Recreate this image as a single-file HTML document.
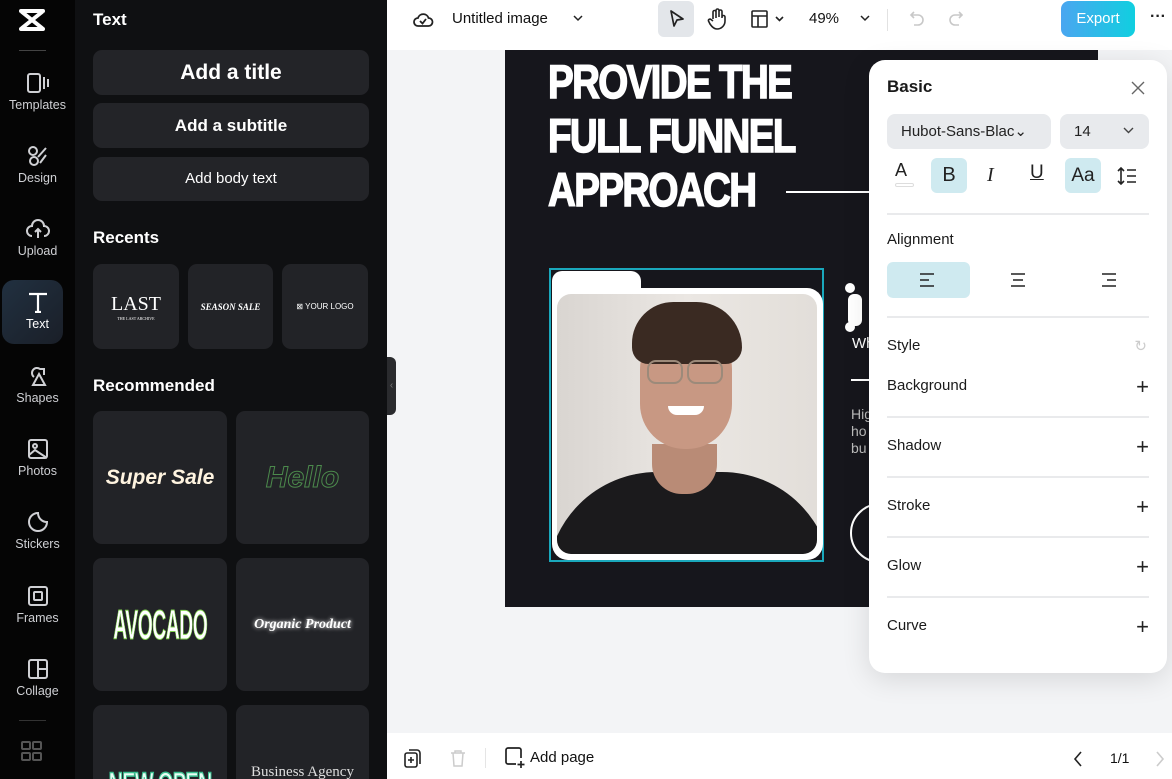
<!DOCTYPE html>
<html style="overflow:hidden"><head><meta charset="utf-8"><style>
*{box-sizing:border-box;margin:0;padding:0}
html,body{width:1172px;height:779px;overflow:hidden}
body{position:relative;font-family:"Liberation Sans",sans-serif;background:#f3f4f6}
.abs{position:absolute}
.rail{left:0;top:0;width:75px;height:779px;background:#050505;overflow:hidden}
.ri{position:absolute;left:0;width:75px;text-align:center;color:#cfd0d4;font-size:12.5px}
.ri svg{display:block;margin:0 auto 4px}
.panel{left:75px;top:0;width:312px;height:779px;background:#0f1012;overflow:hidden}
.btn{position:absolute;left:18px;width:276px;background:#232428;border-radius:9px;color:#fff;text-align:center;font-weight:bold}
.card{position:absolute;background:#222327;border-radius:9px;display:flex;align-items:center;justify-content:center;color:#fff;overflow:hidden;white-space:nowrap}
.h{position:absolute;left:18px;color:#fff;font-weight:bold;font-size:17px}
.top{left:387px;top:0;width:785px;height:50px;background:#fff}
.rp{left:869px;top:60px;width:298px;height:613px;background:#fff;border-radius:16px;box-shadow:0 6px 28px rgba(0,0,0,.12)}
.row{position:absolute;left:18px;width:262px;font-size:15px;color:#1a1a1a}
.sep{position:absolute;left:18px;width:262px;height:2px;background:#e9eaec}
.plus{position:absolute;right:0;top:-3px;font-size:22px;font-weight:300;color:#222}
</style></head><body>

<div class="abs rail">
 <svg class="abs" style="left:18px;top:8px" width="28" height="24" viewBox="0 0 28 24"><path d="M3 3h22M3 21h22M4 4l20 16M24 4L4 20" stroke="#fff" stroke-width="4" fill="none" stroke-linecap="round"/></svg>
 <div class="abs" style="left:19px;top:50px;width:27px;height:1px;background:#444"></div>
 <div class="ri" style="top:72px"><svg width="24" height="22" viewBox="0 0 24 22" fill="none" stroke="#cfd0d4" stroke-width="2"><rect x="2" y="2" width="12" height="18" rx="2"/><path d="M18 5v12M22 7v8"/></svg>Templates</div>
 <div class="ri" style="top:145px"><svg width="24" height="22" viewBox="0 0 24 22" fill="none" stroke="#cfd0d4" stroke-width="2"><circle cx="7" cy="6" r="4"/><circle cx="8" cy="16" r="4"/><path d="M12 12l8-9M14 18l6-8"/></svg>Design</div>
 <div class="ri" style="top:218px"><svg width="24" height="22" viewBox="0 0 24 22" fill="none" stroke="#cfd0d4" stroke-width="2"><path d="M6 18a5 5 0 0 1 0-10a6 6 0 0 1 12 0a5 5 0 0 1 0 10M12 20v-9M9 14l3-3 3 3"/></svg>Upload</div>
 <div class="abs" style="left:2px;top:280px;width:61px;height:64px;border-radius:12px;background:linear-gradient(135deg,#213040,#1a1f28)"></div>
 <div class="ri" style="top:291px;color:#fff"><svg width="24" height="22" viewBox="0 0 24 22" fill="none" stroke="#fff" stroke-width="2.2"><path d="M3 3h18M12 3v18M9 21h6"/></svg>Text</div>
 <div class="ri" style="top:365px"><svg width="24" height="22" viewBox="0 0 24 22" fill="none" stroke="#cfd0d4" stroke-width="2"><path d="M8 12a5 5 0 1 1 6-8l4 0v6"/><path d="M13 9l6 11H7z"/></svg>Shapes</div>
 <div class="ri" style="top:438px"><svg width="24" height="22" viewBox="0 0 24 22" fill="none" stroke="#cfd0d4" stroke-width="2"><rect x="3" y="2" width="18" height="18" rx="2"/><circle cx="9" cy="8" r="2"/><path d="M3 17l6-5 12 8"/></svg>Photos</div>
 <div class="ri" style="top:511px"><svg width="24" height="22" viewBox="0 0 24 22" fill="none" stroke="#cfd0d4" stroke-width="2"><path d="M21 11a9 9 0 1 1-9-9c0 5 4 9 9 9z"/></svg>Stickers</div>
 <div class="ri" style="top:585px"><svg width="24" height="22" viewBox="0 0 24 22" fill="none" stroke="#cfd0d4" stroke-width="2"><rect x="3" y="2" width="18" height="18" rx="2"/><rect x="8" y="7" width="8" height="8" rx="1"/></svg>Frames</div>
 <div class="ri" style="top:658px"><svg width="24" height="22" viewBox="0 0 24 22" fill="none" stroke="#cfd0d4" stroke-width="2"><rect x="3" y="2" width="18" height="18" rx="2"/><path d="M12 2v18M12 11h9"/></svg>Collage</div>
 <div class="abs" style="left:19px;top:720px;width:27px;height:1px;background:#333"></div>
 <svg class="abs" style="left:21px;top:741px" width="22" height="20" viewBox="0 0 22 20" fill="none" stroke="#555" stroke-width="2"><rect x="1" y="1" width="8" height="7" rx="1"/><rect x="12" y="1" width="8" height="7" rx="1"/><rect x="1" y="12" width="8" height="7" rx="1"/><rect x="12" y="12" width="8" height="7" rx="1"/></svg>
</div>

<div class="abs panel">
 <div class="h" style="top:10px">Text</div>
 <div class="btn" style="top:50px;height:45px;line-height:45px;font-size:21px">Add a title</div>
 <div class="btn" style="top:103px;height:45px;line-height:45px;font-size:17px">Add a subtitle</div>
 <div class="btn" style="top:157px;height:44px;line-height:44px;font-size:15px;font-weight:normal">Add body text</div>
 <div class="h" style="top:228px">Recents</div>
 <div class="card" style="left:18px;top:264px;width:86px;height:85px;font-family:'Liberation Serif',serif;font-size:20px;flex-direction:column">LAST<span style="font-size:4px">THE LAST ARCHIVE</span></div>
 <div class="card" style="left:113px;top:264px;width:85px;height:85px;font-family:'Liberation Serif',serif;font-size:9px;font-weight:bold;font-style:italic">SEASON SALE</div>
 <div class="card" style="left:207px;top:264px;width:86px;height:85px;font-size:8px">⊠ YOUR LOGO</div>
 <div class="h" style="top:376px">Recommended</div>
 <div class="card" style="left:18px;top:411px;width:134px;height:133px;font-size:21px;font-weight:bold;font-style:italic;color:#fff4e0">Super Sale</div>
 <div class="card" style="left:161px;top:411px;width:133px;height:133px;font-size:30px;font-weight:bold;font-style:italic;color:transparent;-webkit-text-stroke:1px #4c8a4c">Hello</div>
 <div class="card" style="left:18px;top:558px;width:134px;height:133px"><span style="display:inline-block;font-size:42px;font-weight:bold;color:#fff;-webkit-text-stroke:1px #7fd34c;transform:scaleX(.46);letter-spacing:-1px">AVOCADO</span></div>
 <div class="card" style="left:161px;top:558px;width:133px;height:133px;font-size:14px;font-weight:bold;font-style:italic;font-family:'Liberation Serif',serif;text-shadow:0 0 4px #fff">Organic Product</div>
 <div class="card" style="left:18px;top:705px;width:134px;height:90px;align-items:flex-end"><span style="display:inline-block;white-space:nowrap;font-size:32px;font-weight:bold;color:#eafff5;-webkit-text-stroke:1.5px #3bbf90;transform:scaleX(.62);letter-spacing:-1px;line-height:30px;margin-bottom:-4px">NEW OPEN</span></div>
 <div class="card" style="left:161px;top:705px;width:133px;height:90px;align-items:flex-end;padding-bottom:14px;font-size:15px;font-family:'Liberation Serif',serif;color:#ddd">Business Agency</div>
</div>
<div class="abs" style="left:387px;top:357px;width:9px;height:58px;background:#2a2b2e;border-radius:0 6px 6px 0;color:#777;font-size:10px;line-height:58px;text-align:center">‹</div>

<div class="abs top">
 <svg class="abs" style="left:25px;top:9px" width="22" height="20" viewBox="0 0 22 20" fill="none" stroke="#222" stroke-width="1.8"><path d="M6 17a4 4 0 0 1 0-8a5.5 5.5 0 0 1 10.5 0a4 4 0 0 1 0 8z"/><path d="M8 12l2.5 2.5L14 10"/></svg>
 <div class="abs" style="left:65px;top:10px;font-size:15px;color:#111">Untitled image</div>
 <svg class="abs" style="left:186px;top:15px" width="10" height="7"><path d="M1 1l4 4 4-4" stroke="#222" stroke-width="1.5" fill="none"/></svg>
 <div class="abs" style="left:271px;top:1px;width:36px;height:36px;background:#e3e6ea;border-radius:6px"></div>
 <svg class="abs" style="left:282px;top:9px" width="16" height="20" viewBox="0 0 16 20"><path d="M2 2l12 8-6 1-3 6z" stroke="#222" stroke-width="1.7" fill="none" stroke-linejoin="round"/></svg>
 <svg class="abs" style="left:320px;top:8px" width="20" height="22" viewBox="0 0 20 22" fill="none" stroke="#222" stroke-width="1.6" stroke-linejoin="round"><path d="M6 11V4a1.5 1.5 0 0 1 3 0v6M9 9V2.5a1.5 1.5 0 0 1 3 0V9M12 9V3.5a1.5 1.5 0 0 1 3 0V10M15 9a1.5 1.5 0 0 1 3 0v4a8 8 0 0 1-8 8c-3 0-5-2-7-5l-1.5-3a1.5 1.5 0 0 1 2.5-1.5L6 13"/></svg>
 <svg class="abs" style="left:364px;top:10px" width="34" height="18" viewBox="0 0 34 18" fill="none" stroke="#222" stroke-width="1.6"><rect x="1" y="1" width="15" height="16" rx="1"/><path d="M1 6h15M7 6v11M25 7l3.5 3.5L32 7"/></svg>
 <div class="abs" style="left:422px;top:10px;font-size:15px;color:#111">49%</div>
 <svg class="abs" style="left:473px;top:15px" width="10" height="7"><path d="M1 1l4 4 4-4" stroke="#222" stroke-width="1.5" fill="none"/></svg>
 <div class="abs" style="left:500px;top:9px;width:1px;height:22px;background:#e2e2e2"></div>
 <svg class="abs" style="left:522px;top:10px" width="16" height="18" viewBox="0 0 16 18" fill="none" stroke="#c8c8c8" stroke-width="1.6"><path d="M5 2L2 5l3 3M2 5h7a5 5 0 0 1 0 10H5"/></svg>
 <svg class="abs" style="left:561px;top:10px" width="16" height="18" viewBox="0 0 16 18" fill="none" stroke="#c8c8c8" stroke-width="1.6"><path d="M11 2l3 3-3 3M14 5H7a5 5 0 0 0 0 10h4"/></svg>
 <div class="abs" style="left:674px;top:1px;width:74px;height:36px;border-radius:8px;background:linear-gradient(90deg,#4aa6f0,#10cfe0);color:#fff;font-size:15px;text-align:center;line-height:36px">Export</div>
 <div class="abs" style="left:763px;top:8px;font-size:16px;color:#222;font-weight:bold">···</div>
</div>

<!-- artboard -->
<div class="abs" style="left:505px;top:50px;width:593px;height:557px;background:#16161c;overflow:hidden">
 <div class="abs" style="left:43px;top:5px;color:#fff;font-weight:bold;font-size:47px;line-height:54px;letter-spacing:-2px;transform:scaleX(.82);transform-origin:left top;white-space:nowrap;-webkit-text-stroke:1.5px #fff">PROVIDE THE<br>FULL FUNNEL<br>APPROACH</div>
 <div class="abs" style="left:281px;top:141px;width:90px;height:2px;background:#fff"></div>
 <div class="abs" style="left:44px;top:218px;width:275px;height:294px;border:2px solid #1aa8bc"></div>
 <div class="abs" style="left:47px;top:221px;width:89px;height:30px;background:#fff;border-radius:10px 10px 0 0"></div>
 <div class="abs" style="left:47px;top:238px;width:271px;height:272px;background:#fff;border-radius:0 16px 16px 16px"></div>
 <div class="abs" style="left:52px;top:244px;width:260px;height:260px;border-radius:14px;background:linear-gradient(90deg,#d9d5d1,#ebe7e3 50%,#e2ded9);overflow:hidden">
  <div class="abs" style="left:-10px;top:178px;width:285px;height:130px;background:#1b1a1c;border-radius:110px 110px 0 0"></div>
  <div class="abs" style="left:95px;top:150px;width:65px;height:50px;background:#b98b76;border-radius:0 0 30px 30px"></div>
  <div class="abs" style="left:83px;top:30px;width:92px;height:125px;background:#c89883;border-radius:45px 45px 45px 45px"></div>
  <div class="abs" style="left:75px;top:8px;width:110px;height:62px;background:#3a2a22;border-radius:50px 55px 20px 20px"></div>
  <div class="abs" style="left:90px;top:66px;width:36px;height:24px;border:2px solid #9c8a7a;border-radius:9px"></div>
  <div class="abs" style="left:130px;top:66px;width:36px;height:24px;border:2px solid #9c8a7a;border-radius:9px"></div>
  <div class="abs" style="left:111px;top:112px;width:36px;height:9px;background:#fff;border-radius:0 0 12px 12px"></div>
 </div>
 <div class="abs" style="left:343px;top:244px;width:14px;height:32px;border:2px solid #fff;background:#fff;border-radius:6px"></div>
 <div class="abs" style="left:340px;top:233px;width:10px;height:10px;background:#fff;border-radius:50%"></div>
 <div class="abs" style="left:340px;top:272px;width:10px;height:10px;background:#fff;border-radius:50%"></div>
 <div class="abs" style="left:347px;top:285px;color:#fff;font-size:15px">Wh</div>
 <div class="abs" style="left:346px;top:329px;width:30px;height:2px;background:#fff"></div>
 <div class="abs" style="left:346px;top:356px;color:#bbb;font-size:14px;line-height:17px">Hig<br>ho<br>bu</div>
 <div class="abs" style="left:345px;top:453px;width:60px;height:60px;border:2px solid #fff;border-radius:50%"></div>
</div>

<!-- right panel -->
<div class="abs rp">
 <div class="row" style="top:17px;font-weight:bold;font-size:17px">Basic</div>
 <svg class="abs" style="left:262px;top:21px" width="14" height="14"><path d="M1 1l12 12M13 1L1 13" stroke="#666" stroke-width="1.4"/></svg>
 <div class="abs" style="left:18px;top:54px;width:164px;height:35px;background:#e8eaed;border-radius:8px;font-size:15px;color:#222;line-height:35px;padding-left:14px">Hubot-Sans-Blac⌄</div>
 <div class="abs" style="left:191px;top:54px;width:89px;height:35px;background:#e8eaed;border-radius:8px;font-size:15px;color:#222;line-height:35px;padding-left:14px">14</div>
 <svg class="abs" style="left:254px;top:67px" width="11" height="7"><path d="M1 1l4.5 4.5L10 1" stroke="#444" stroke-width="1.4" fill="none"/></svg>
 <div class="abs" style="left:26px;top:100px;font-size:18px;color:#222">A</div>
 <div class="abs" style="left:26px;top:123px;width:19px;height:4px;background:#fff;border:1px solid #ddd;border-radius:2px"></div>
 <div class="abs" style="left:62px;top:98px;width:36px;height:35px;background:#cfeaf0;border-radius:6px;text-align:center;line-height:35px;font-size:20px;color:#222">B</div>
 <div class="abs" style="left:118px;top:104px;font-size:20px;font-style:italic;font-family:'Liberation Serif',serif;color:#222">I</div>
 <div class="abs" style="left:161px;top:102px;font-size:19px;text-decoration:underline;color:#222">U</div>
 <div class="abs" style="left:196px;top:98px;width:36px;height:35px;background:#cfeaf0;border-radius:6px;text-align:center;line-height:35px;font-size:19px;color:#222">Aa</div>
 <svg class="abs" style="left:248px;top:106px" width="20" height="20" viewBox="0 0 20 20" fill="none" stroke="#222" stroke-width="1.6"><path d="M4 2v16M1 5l3-3 3 3M1 15l3 3 3-3M10 4h9M10 10h9M10 16h9"/></svg>
 <div class="sep" style="top:153px"></div>
 <div class="row" style="top:171px">Alignment</div>
 <div class="abs" style="left:18px;top:202px;width:83px;height:36px;background:#cfeaf0;border-radius:6px"></div>
 <svg class="abs" style="left:51px;top:213px" width="16" height="14"><path d="M0 1h14M0 7h9M0 13h14" stroke="#222" stroke-width="1.6"/></svg>
 <svg class="abs" style="left:141px;top:213px" width="16" height="14"><path d="M1 1h14M3 7h10M1 13h14" stroke="#222" stroke-width="1.6"/></svg>
 <svg class="abs" style="left:231px;top:213px" width="16" height="14"><path d="M2 1h14M7 7h9M2 13h14" stroke="#222" stroke-width="1.6"/></svg>
 <div class="sep" style="top:256px"></div>
 <div class="row" style="top:277px">Style<span style="position:absolute;right:2px;color:#ccc;font-size:15px">↻</span></div>
 <div class="row" style="top:317px">Background<span class="plus">+</span></div>
 <div class="sep" style="top:356px"></div>
 <div class="row" style="top:377px">Shadow<span class="plus">+</span></div>
 <div class="sep" style="top:416px"></div>
 <div class="row" style="top:437px">Stroke<span class="plus">+</span></div>
 <div class="sep" style="top:476px"></div>
 <div class="row" style="top:497px">Glow<span class="plus">+</span></div>
 <div class="sep" style="top:536px"></div>
 <div class="row" style="top:557px">Curve<span class="plus">+</span></div>
</div>

<!-- bottom bar -->
<div class="abs" style="left:387px;top:733px;width:785px;height:46px;background:#fff">
 <svg class="abs" style="left:17px;top:16px" width="18" height="20" viewBox="0 0 18 20" fill="none" stroke="#222" stroke-width="1.6"><rect x="1" y="4" width="12" height="14" rx="2"/><path d="M5 1h8a3 3 0 0 1 3 3v11M7 8v6M4 11h6"/></svg>
 <svg class="abs" style="left:63px;top:16px" width="16" height="18" viewBox="0 0 16 18" fill="none" stroke="#ccc" stroke-width="1.5"><path d="M1 4h14M5 4V2h6v2M3 4l1 13h8l1-13"/></svg>
 <div class="abs" style="left:98px;top:15px;width:1px;height:20px;background:#e5e5e5"></div>
 <svg class="abs" style="left:118px;top:14px" width="20" height="21" viewBox="0 0 20 21" fill="none" stroke="#222" stroke-width="1.7"><path d="M11 17H3a2 2 0 0 1-2-2V3a2 2 0 0 1 2-2h11a2 2 0 0 1 2 2v8M16 14v7M12.5 17.5h7"/></svg>
 <div class="abs" style="left:143px;top:16px;font-size:15px;color:#111">Add page</div>
 <svg class="abs" style="left:686px;top:18px" width="10" height="16"><path d="M8 1L2 8l6 7" stroke="#222" stroke-width="1.6" fill="none"/></svg>
 <div class="abs" style="left:723px;top:17px;font-size:14px;color:#111">1/1</div>
 <svg class="abs" style="left:768px;top:18px" width="10" height="16"><path d="M2 1l6 7-6 7" stroke="#ccc" stroke-width="1.6" fill="none"/></svg>
</div>
</body></html>
